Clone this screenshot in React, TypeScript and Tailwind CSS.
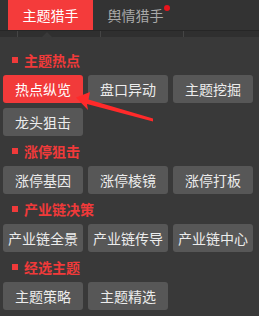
import React from "react";

const font = { fontFamily: '"Microsoft YaHei", "Noto Sans CJK SC", "Noto Sans", sans-serif' };

function Btn({ label, active }: { label: string; active?: boolean }) {
  return (
    <div
      className={
        "w-[80px] h-[28px] rounded-[3px] flex items-center justify-center text-[14px] leading-none " +
        (active ? "bg-[#f23a3a] text-white" : "bg-[#575757] text-[#ececec]")
      }
    >
      {label}
    </div>
  );
}

function Header({ label }: { label: string }) {
  return (
    <div className="h-[20px] flex items-center pl-[12px]">
      <span className="w-[6px] h-[6px] bg-[#f03a3a]" />
      <span className="ml-[6px] text-[14px] font-bold text-[#f03a3a] leading-none">{label}</span>
    </div>
  );
}

function Row({ items, active }: { items: string[]; active?: string }) {
  return (
    <div className="flex gap-[5px] px-[3px]">
      {items.map((i) => (
        <Btn key={i} label={i} active={i === active} />
      ))}
    </div>
  );
}

export default function App() {
  return (
    <div className="relative w-[259px] h-[316px] bg-[#393939] overflow-hidden" style={font}>
      <div className="h-[30px] bg-[#333333] flex pl-[8px]">
        <div className="w-[85px] h-full bg-[#f43b3b] text-white text-[14px] flex items-center justify-center">
          主题猎手
        </div>
        <div className="relative w-[85px] h-full text-[#a9a9a9] text-[14px] flex items-center justify-center">
          舆情猎手
          <span className="absolute left-[71px] top-[5px] w-[6px] h-[6px] rounded-full bg-[#e8141c]" />
        </div>
      </div>
      <div className="relative h-[7px] bg-[#2f2f2f] border-t border-[#262626] flex">
        <div className="w-[18px] border-r border-[#454545]" />
        <div className="w-[83px] border-r border-[#454545]" />
        <div className="w-[83px] border-r border-[#454545]" />
        <div className="absolute left-[41px] top-[1px] w-0 h-0 border-l-[6px] border-r-[6px] border-b-[6px] border-l-transparent border-r-transparent border-b-[#393939]" />
      </div>
      <div className="flex flex-col gap-[5px] pt-[13px]">
        <Header label="主题热点" />
        <Row items={["热点纵览", "盘口异动", "主题挖掘"]} active="热点纵览" />
        <Row items={["龙头狙击"]} />
        <Header label="涨停狙击" />
        <Row items={["涨停基因", "涨停棱镜", "涨停打板"]} />
        <Header label="产业链决策" />
        <Row items={["产业链全景", "产业链传导", "产业链中心"]} />
        <Header label="经选主题" />
        <Row items={["主题策略", "主题精选"]} />
      </div>
      <svg className="absolute left-0 top-0 pointer-events-none" width="259" height="316" viewBox="0 0 259 316">
        <polygon
          points="76,97.5 90,92 88.5,99.5 153,118.5 153,121.5 87,104 88,110"
          fill="#ff2a2a"
        />
      </svg>
    </div>
  );
}
